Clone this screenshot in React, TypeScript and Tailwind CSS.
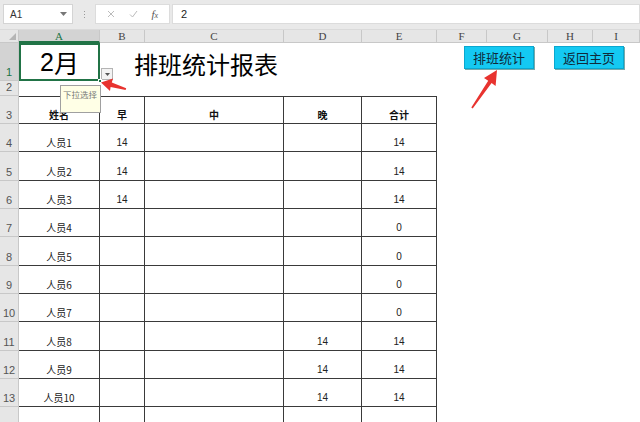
import React from 'react';

// column widths: row header, A..I
const colW = ['w-[19px]', 'w-[81px]', 'w-[45px]', 'w-[139px]', 'w-[78px]', 'w-[75px]', 'w-[50px]', 'w-[61px]', 'w-[45px]', 'w-[47px]'];
const letters = ['A', 'B', 'C', 'D', 'E', 'F', 'G', 'H', 'I'];

const cjk = { fontFamily: '"Noto Sans CJK SC", "Liberation Sans", sans-serif' };
const sans = { fontFamily: '"Liberation Sans", "Noto Sans CJK SC", sans-serif' };

interface DataRow {
  n: number;
  h: string;
  cells: string[];
}

const rows: DataRow[] = [
  { n: 4, h: 'h-[28px]', cells: ['人员1', '14', '', '', '14'] },
  { n: 5, h: 'h-[29px]', cells: ['人员2', '14', '', '', '14'] },
  { n: 6, h: 'h-[28px]', cells: ['人员3', '14', '', '', '14'] },
  { n: 7, h: 'h-[28px]', cells: ['人员4', '', '', '', '0'] },
  { n: 8, h: 'h-[29px]', cells: ['人员5', '', '', '', '0'] },
  { n: 9, h: 'h-[28px]', cells: ['人员6', '', '', '', '0'] },
  { n: 10, h: 'h-[28px]', cells: ['人员7', '', '', '', '0'] },
  { n: 11, h: 'h-[29px]', cells: ['人员8', '', '', '14', '14'] },
  { n: 12, h: 'h-[28px]', cells: ['人员9', '', '', '14', '14'] },
  { n: 13, h: 'h-[28px]', cells: ['人员10', '', '', '14', '14'] },
  // row 14 is cut by the window edge, its number is below the fold
  { n: 0, h: 'h-[28px]', cells: ['', '', '', '', ''] },
];

const RowHead = ({ n, active = false }: { n: number; active?: boolean }) => (
  <div
    className={`${colW[0]} shrink-0 h-full flex items-end justify-center pb-[2px] text-[11px] leading-[12px] border-r border-b border-[#c8c8c8] ${
      active ? 'bg-[#d3d3d3] text-[#217346]' : 'bg-[#e6e6e6] text-[#555]'
    }`}
    style={sans}
  >
    {n > 0 ? n : ''}
  </div>
);

const Arrows = () => (
  <svg className="absolute left-0 top-0 pointer-events-none" width="640" height="422" viewBox="0 0 640 422">
    <polygon
      fill="#e8332f"
      points="101,82.5 113,78.5 111.8,82.6 126.2,88.2 125.6,90 110.6,86.9 110,91"
    />
    <polygon
      fill="#e8332f"
      points="497,70 495.6,86 491.6,83.1 472.7,108.6 471.3,107.6 488.2,80.8 484,77.9"
    />
  </svg>
);

export default function App() {
  return (
    <div className="relative w-[640px] h-[422px] overflow-hidden bg-white select-none">
      {/* formula bar */}
      <div className="h-[30px] bg-[#e9e9e9] flex items-start pt-[4px] border-b border-[#dadada]">
        <div className="ml-[3px] w-[70px] h-[20px] bg-white border border-[#d4d4d4] flex items-center justify-between pl-[6px] pr-[5px]">
          <span className="text-[10px] text-[#333]" style={sans}>A1</span>
          <svg width="7" height="4" viewBox="0 0 7 4"><path d="M0 0h7L3.5 4z" fill="#777" /></svg>
        </div>
        <div className="w-[22px] h-[20px] flex flex-col items-center justify-center gap-[2px]">
          <span className="w-[1px] h-[1px] bg-[#999]" />
          <span className="w-[1px] h-[1px] bg-[#999]" />
          <span className="w-[1px] h-[1px] bg-[#999]" />
        </div>
        <div className="w-[75px] h-[20px] bg-white border border-[#dcdcdc] flex items-center justify-around px-[4px]">
          <svg width="8" height="8" viewBox="0 0 8 8"><path d="M1 1l6 6M7 1L1 7" stroke="#bbb" strokeWidth="1" /></svg>
          <svg width="9" height="8" viewBox="0 0 9 8"><path d="M1 4.5l2.5 2.5L8 1" stroke="#bbb" strokeWidth="1" fill="none" /></svg>
          <span className="text-[11px] italic text-[#555]" style={{ fontFamily: '"Liberation Serif", serif' }}>
            f<span className="text-[8px]">x</span>
          </span>
        </div>
        <div className="ml-[2px] flex-1 h-[20px] bg-white border border-[#dcdcdc] flex items-center pl-[8px]">
          <span className="text-[11px] text-[#222]" style={sans}>2</span>
        </div>
      </div>

      {/* column headers */}
      <div className="flex h-[13px]">
        <div className={`${colW[0]} shrink-0 bg-[#e6e6e6] border-r border-b border-[#c8c8c8] relative`}>
          <svg className="absolute right-[2px] bottom-[2px]" width="7" height="7" viewBox="0 0 7 7"><path d="M7 0v7H0z" fill="#b5b5b5" /></svg>
        </div>
        {letters.map((l, i) => (
          <div
            key={l}
            className={`${colW[i + 1]} shrink-0 flex items-center justify-center text-[11px] leading-[12px] border-r ${
              i === 0 ? 'bg-[#d3d3d3] text-[#217346] border-b-2 border-b-[#217346] border-r-[#c8c8c8]' : 'bg-[#e6e6e6] text-[#444] border-b border-[#c8c8c8]'
            }`}
            style={{ fontFamily: '"Liberation Serif", serif' }}
          >
            {l}
          </div>
        ))}
      </div>

      {/* row 1 */}
      <div className="flex h-[38px]">
        <RowHead n={1} active />
        <div className={`${colW[1]} shrink-0 h-full border-2 border-[#217346] flex items-center justify-center pt-[2px] text-[25px] text-black`} style={cjk}>
          <span style={sans}>2</span>月
        </div>
        <div className="flex-1 h-full flex items-center pl-[34px] pt-[3px] text-[24px] text-black" style={cjk}>
          排班统计报表
        </div>
      </div>

      {/* row 2 */}
      <div className="flex h-[15px]">
        <RowHead n={2} />
      </div>

      {/* row 3: table header */}
      <div className="flex h-[28px]">
        <RowHead n={3} />
        {['姓名', '早', '中', '晚', '合计'].map((t, i) => (
          <div
            key={t}
            className={`${colW[i + 1]} shrink-0 h-full border-t border-r border-b border-[#3a3a3a] flex items-end justify-center pb-[2px] text-[10px] leading-[12px] font-bold text-[#111]`}
            style={cjk}
          >
            {t}
          </div>
        ))}
      </div>

      {/* data rows */}
      {rows.map((r, k) => (
        <div key={k} className={`flex ${r.h}`}>
          <RowHead n={r.n} />
          {r.cells.map((c, i) => (
            <div
              key={i}
              className={`${colW[i + 1]} shrink-0 h-full border-r border-b border-[#3a3a3a] flex items-end justify-center pb-[2px] text-[10px] leading-[12px] text-[#222]`}
              style={i === 0 ? cjk : sans}
            >
              {c}
            </div>
          ))}
        </div>
      ))}

      {/* dropdown button + fill handle */}
      <div className="absolute left-[101px] top-[68px] w-[12px] h-[12px] bg-[#f3f3f3] border border-[#b4b4b4] flex items-center justify-center">
        <svg width="5" height="3" viewBox="0 0 5 3"><path d="M0 0h5L2.5 3z" fill="#555" /></svg>
      </div>
      <div className="absolute left-[98px] top-[79px] w-[4px] h-[4px] bg-[#217346] border border-white" />

      {/* input hint tooltip */}
      <div className="absolute left-[60px] top-[85px] w-[41px] h-[28px] bg-[#ffffe6] border border-[#a0a0a0] pl-[2px] pt-[3px]">
        <span className="text-[8.5px] leading-[10px] text-[#777] block whitespace-nowrap" style={cjk}>下拉选择</span>
      </div>

      {/* macro buttons */}
      <div
        className="absolute left-[464px] top-[46px] w-[70px] h-[23px] bg-[#14c9f2] border border-[#0aa7cf] flex items-center justify-center text-[13px] text-[#0f2a3a] shadow-[1px_1px_0_#7aa]"
        style={cjk}
      >
        排班统计
      </div>
      <div
        className="absolute left-[554px] top-[46px] w-[70px] h-[23px] bg-[#14c9f2] border border-[#0aa7cf] flex items-center justify-center text-[13px] text-[#0f2a3a] shadow-[1px_1px_0_#7aa]"
        style={cjk}
      >
        返回主页
      </div>

      <Arrows />
    </div>
  );
}
